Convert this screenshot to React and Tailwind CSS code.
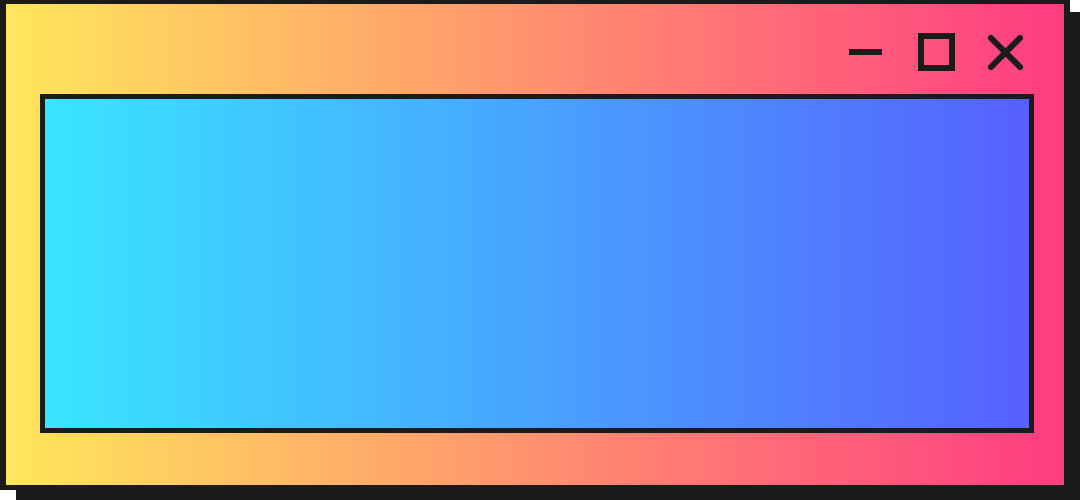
import React from "react";

function WindowControls() {
  return (
    <div className="flex items-center">
      {/* minimize */}
      <svg width="33" height="6" viewBox="0 0 33 6" className="block">
        <rect x="0" y="0" width="33" height="6" fill="#1b1b1b" />
      </svg>
      {/* maximize */}
      <svg width="37" height="38" viewBox="0 0 37 38" className="ml-[36px] block">
        <rect x="3" y="3" width="31" height="32" fill="none" stroke="#1b1b1b" strokeWidth="6" />
      </svg>
      {/* close */}
      <svg width="35" height="35" viewBox="0 0 35 35" className="ml-[33px] block">
        <path d="M3 3 L32 32 M32 3 L3 32" stroke="#1b1b1b" strokeWidth="6" strokeLinecap="square" />
      </svg>
    </div>
  );
}

export default function App() {
  return (
    <div className="relative w-[1080px] h-[500px] bg-white overflow-hidden">
      {/* drop shadow */}
      <div className="absolute left-[16px] top-[12px] right-0 bottom-0 bg-[#1b1b1b]" />

      <div className="relative w-[1070px] h-[490px] border-[#1b1b1b] border-l-[6px] border-r-[6px] border-t-[4px] border-b-[5px] bg-linear-to-r/srgb from-[#ffe75b] to-[#ff3c82] flex flex-col pl-[34px] pr-[30px]">
        <div className="h-[90px] pt-[6px] flex items-center justify-end pr-[11px]">
          <WindowControls />
        </div>
        <div className="h-[339px] border-[5px] border-[#1b1b1b] bg-linear-to-r/srgb from-[#39e5ff] to-[#5660ff]" />
      </div>
    </div>
  );
}
